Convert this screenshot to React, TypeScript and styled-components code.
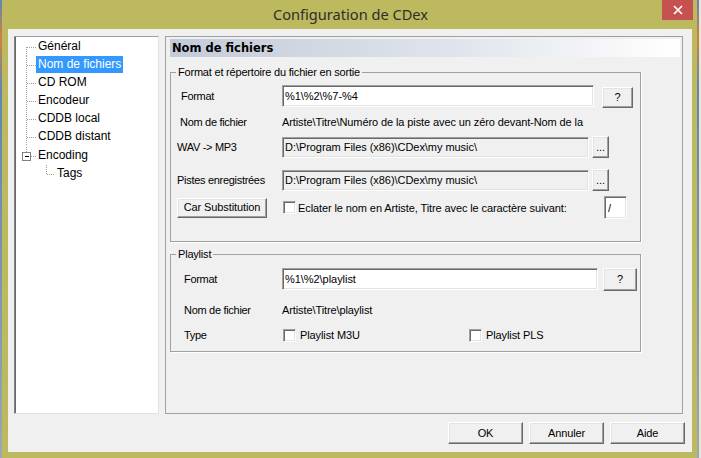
import React from "react";
import styled, { createGlobalStyle } from "styled-components";

const Global = createGlobalStyle`
  html, body { margin: 0; padding: 0; background: #e6e5dc; }
  body { width: 701px; height: 458px; overflow: hidden; font-family: "Liberation Sans", Arial, sans-serif; }
  * { box-sizing: border-box; }
`;

const Screen = styled.div`
  width: 701px;
  height: 458px;
  display: flex;
  background: #e6e5dc;
`;

const DesktopEdge = styled.div`
  width: 2px;
  height: 100%;
  background: linear-gradient(to bottom, #5f86b5 0%, #d08040 8%, #5f86b5 20%, #7b95b2 60%, #9aa7b5 100%);
`;

const Frame = styled.div`
  width: 695px;
  height: 458px;
  background: #bdb95e;
  display: flex;
  flex-direction: column;
  padding-left: 6px;
`;

const TitleBar = styled.div`
  height: 29px;
  display: grid;
  grid-template-columns: 1fr auto 1fr;
  align-items: start;
  padding-right: 4px;
`;

const Title = styled.div`
  grid-column: 2;
  padding-top: 4px;
  font-family: "Noto Sans", "Open Sans", sans-serif;
  font-size: 14.6px;
  line-height: 20px;
  color: #2e2e2a;
`;

const CloseButton = styled.div`
  grid-column: 3;
  justify-self: end;
  width: 31px;
  height: 20px;
  background: #c75050;
  display: flex;
  align-items: center;
  justify-content: center;
`;

const Client = styled.div`
  width: 684px;
  height: 423px;
  background: #f0f0f0;
  display: flex;
  flex-direction: column;
  padding: 7px 7px 0 6px;
`;

const MainRow = styled.div`
  display: flex;
  gap: 6px;
  height: 378px;
  margin-right: 2px;
`;

const TreeBox = styled.div`
  width: 145px;
  height: 100%;
  background: #fff;
  border: 1px solid;
  border-color: #a0a0a0 #e3e3e3 #e3e3e3 #828282;
  box-shadow: inset 1px 0 0 #696969;
  padding: 1px 0 0 1px;
  display: flex;
  flex-direction: column;
`;

const TreeRow = styled.div<{ $h?: number }>`
  height: ${(p) => p.$h ?? 18}px;
  display: flex;
  align-items: flex-start;
`;

const TreeLabel = styled.span<{ $selected?: boolean }>`
  margin-top: 0;
  height: 17px;
  line-height: 17px;
  padding: 0 2px;
  font-size: 12px;
  white-space: nowrap;
  color: ${(p) => (p.$selected ? "#fff" : "#000")};
  background: ${(p) => (p.$selected ? "#3399ff" : "transparent")};
`;

const Connector = styled.svg`
  flex: none;
  display: block;
`;

const Page = styled.div`
  width: 518px;
  height: 100%;
  border: 1px solid #a0a0a0;
  padding: 2px 3px 0 4px;
  display: flex;
  flex-direction: column;
`;

const PageHeader = styled.div`
  width: 510px;
  height: 18px;
  padding-left: 2px;
  background: linear-gradient(to right, #c3cbd8 0%, #dfe4ec 55%, #ffffff 100%);
  font-family: "DejaVu Sans", Verdana, sans-serif;
  font-weight: bold;
  font-size: 11.5px;
  line-height: 18px;
  color: #000;
`;

const Group = styled.fieldset<{ $mt: number; $pt: number; $pb: number }>`
  margin: ${(p) => p.$mt}px 0 0 0;
  padding: ${(p) => p.$pt}px 0 ${(p) => p.$pb}px 6px;
  width: 471px;
  min-width: 0;
  border: 1px solid #a0a0a0;
  box-shadow: 1px 1px 0 #fff;
  display: flex;
  flex-direction: column;
`;

const Legend = styled.legend`
  margin-left: -1px;
  padding: 0 2px;
  font-size: 11px;
  letter-spacing: -0.2px;
  line-height: 13px;
  color: #000;
`;

const Row = styled.div<{ $h: number; $mt?: number; $pr?: number }>`
  display: flex;
  align-items: center;
  height: ${(p) => p.$h}px;
  margin-top: ${(p) => p.$mt ?? 0}px;
  padding-right: ${(p) => p.$pr ?? 0}px;
`;

const Label = styled.span<{ $indent?: number }>`
  flex: none;
  width: 105px;
  padding-left: ${(p) => p.$indent ?? 0}px;
  font-size: 11px;
  letter-spacing: -0.3px;
  color: #000;
  white-space: nowrap;
`;

const Value = styled.span`
  font-size: 11px;
  letter-spacing: -0.1px;
  color: #000;
  white-space: nowrap;
`;

const TextBox = styled.input<{ $w: number; $h: number }>`
  flex: none;
  width: ${(p) => p.$w}px;
  height: ${(p) => p.$h}px;
  margin: 0;
  padding: 0 2px;
  background: ${(p) => (p.disabled ? "#f0f0f0" : "#fff")};
  border: 1px solid;
  border-color: #a0a0a0 #fff #fff #a0a0a0;
  box-shadow: inset 1px 1px 0 #696969, inset -1px -1px 0 #e3e3e3;
  font-family: "Liberation Sans", Arial, sans-serif;
  font-size: 11px;
  letter-spacing: -0.05px;
  color: #000;
  outline: none;
  &:disabled { color: #000; -webkit-text-fill-color: #000; opacity: 1; }
`;

const Button = styled.button<{ $w: number; $h: number; $ml?: number; $mt?: number }>`
  flex: none;
  width: ${(p) => p.$w}px;
  height: ${(p) => p.$h}px;
  margin: ${(p) => p.$mt ?? 0}px 0 0 ${(p) => p.$ml ?? 0}px;
  padding: 0;
  align-self: ${(p) => (p.$mt ? "flex-start" : "center")};
  background: #f0f0f0;
  border: 1px solid;
  border-color: #ffffff #696969 #696969 #ffffff;
  box-shadow: inset -1px -1px 0 #a0a0a0, inset 1px 1px 0 #e3e3e3;
  font-family: "Liberation Sans", Arial, sans-serif;
  font-size: 11px;
  letter-spacing: -0.1px;
  color: #000;
  line-height: 1;
`;

const CheckItem = styled.label<{ $ml?: number; $gap?: number }>`
  display: flex;
  align-items: center;
  gap: ${(p) => p.$gap ?? 4}px;
  margin-left: ${(p) => p.$ml ?? 0}px;
  font-size: 11px;
  letter-spacing: -0.1px;
  color: #000;
  white-space: nowrap;
`;

const CheckBox = styled.span`
  flex: none;
  width: 13px;
  height: 13px;
  background: #fff;
  border: 1px solid;
  border-color: #a0a0a0 #fff #fff #a0a0a0;
  box-shadow: inset 1px 1px 0 #696969, inset -1px -1px 0 #e3e3e3;
`;

const TypeChoices = styled.div`
  display: grid;
  grid-template-columns: 186px auto;
  margin-left: 1px;
`;

const SeparatorBox = styled(TextBox)`
  margin-left: auto;
  padding: 0 3px;
  align-self: flex-start;
`;

const ButtonRow = styled.div`
  display: flex;
  justify-content: flex-end;
  gap: 6px;
  margin-top: 8px;
`;

type TreeKind = "first" | "mid" | "expander" | "child";

const TreeConnector = ({ kind }: { kind: TreeKind }) => {
  const dot = { stroke: "#a0a0a0", strokeWidth: 1, strokeDasharray: "1 1", shapeRendering: "crispEdges" as const };
  if (kind === "child") {
    return (
      <Connector width={39} height={18}>
        <line x1={30.5} y1={0} x2={30.5} y2={10} {...dot} />
        <line x1={31} y1={9.5} x2={39} y2={9.5} {...dot} />
      </Connector>
    );
  }
  if (kind === "expander") {
    return (
      <Connector width={20} height={18}>
        <line x1={10.5} y1={0} x2={10.5} y2={6} {...dot} />
        <rect x={6.5} y={5.5} width={8} height={8} fill="#fff" stroke="#808080" shapeRendering="crispEdges" />
        <line x1={8.5} y1={9.5} x2={12.5} y2={9.5} stroke="#000" shapeRendering="crispEdges" />
        <line x1={15} y1={9.5} x2={20} y2={9.5} {...dot} />
      </Connector>
    );
  }
  return (
    <Connector width={20} height={18}>
      <line x1={10.5} y1={kind === "first" ? 9 : 0} x2={10.5} y2={18} {...dot} />
      <line x1={11} y1={9.5} x2={20} y2={9.5} {...dot} />
    </Connector>
  );
};

const treeItems: { label: string; kind: TreeKind; selected?: boolean; h?: number }[] = [
  { label: "Général", kind: "first" },
  { label: "Nom de fichiers", kind: "mid", selected: true },
  { label: "CD ROM", kind: "mid" },
  { label: "Encodeur", kind: "mid" },
  { label: "CDDB local", kind: "mid" },
  { label: "CDDB distant", kind: "mid", h: 19 },
  { label: "Encoding", kind: "expander" },
  { label: "Tags", kind: "child" },
];

export default function App() {
  return (
    <>
      <Global />
      <Screen>
        <DesktopEdge />
        <Frame>
          <TitleBar>
            <Title>Configuration de CDex</Title>
            <CloseButton>
              <svg width="10" height="10" viewBox="0 0 10 10">
                <path d="M1 1 L9 9 M9 1 L1 9" stroke="#fff" strokeWidth="1.7" fill="none" />
              </svg>
            </CloseButton>
          </TitleBar>
          <Client>
            <MainRow>
              <TreeBox>
                {treeItems.map((it) => (
                  <TreeRow key={it.label} $h={it.h}>
                    <TreeConnector kind={it.kind} />
                    <TreeLabel $selected={it.selected}>{it.label}</TreeLabel>
                  </TreeRow>
                ))}
              </TreeBox>
              <Page>
                <PageHeader>Nom de fichiers</PageHeader>
                <Group $mt={9} $pt={6} $pb={22}>
                  <Legend>Format et répertoire du fichier en sortie</Legend>
                  <Row $h={22}>
                    <Label $indent={4}>Format</Label>
                    <TextBox $w={312} $h={22} readOnly value="%1\%2\%7-%4" />
                    <Button $w={31} $h={21} $ml={8} $mt={2}>?</Button>
                  </Row>
                  <Row $h={18} $mt={6}>
                    <Label $indent={3}>Nom de fichier</Label>
                    <Value>Artiste\Titre\Numéro de la piste avec un zéro devant-Nom de la</Value>
                  </Row>
                  <Row $h={22} $mt={5}>
                    <Label>WAV -&gt; MP3</Label>
                    <TextBox $w={307} $h={21} disabled value="D:\Program Files (x86)\CDex\my music\" />
                    <Button $w={17} $h={22} $ml={3}>...</Button>
                  </Row>
                  <Row $h={22} $mt={11}>
                    <Label>Pistes enregistrées</Label>
                    <TextBox $w={307} $h={21} disabled value="D:\Program Files (x86)\CDex\my music\" />
                    <Button $w={17} $h={22} $ml={3}>...</Button>
                  </Row>
                  <Row $h={23} $mt={5} $pr={13}>
                    <Button $w={90} $h={20}>Car Substitution</Button>
                    <CheckItem $ml={16} $gap={2}>
                      <CheckBox />
                      Eclater le nom en Artiste, Titre avec le caractère suivant:
                    </CheckItem>
                    <SeparatorBox $w={23} $h={23} readOnly value="/" />
                  </Row>
                </Group>
                <Group $mt={6} $pt={7} $pb={7}>
                  <Legend>Playlist</Legend>
                  <Row $h={22}>
                    <Label $indent={7}>Format</Label>
                    <TextBox $w={316} $h={22} readOnly value="%1\%2\playlist" />
                    <Button $w={34} $h={23} $ml={5}>?</Button>
                  </Row>
                  <Row $h={18} $mt={11}>
                    <Label $indent={7}>Nom de fichier</Label>
                    <Value>Artiste\Titre\playlist</Value>
                  </Row>
                  <Row $h={18} $mt={7}>
                    <Label $indent={7}>Type</Label>
                    <TypeChoices>
                      <CheckItem>
                        <CheckBox />
                        Playlist M3U
                      </CheckItem>
                      <CheckItem>
                        <CheckBox />
                        Playlist PLS
                      </CheckItem>
                    </TypeChoices>
                  </Row>
                </Group>
              </Page>
            </MainRow>
            <ButtonRow>
              <Button $w={75} $h={22}>OK</Button>
              <Button $w={75} $h={22}>Annuler</Button>
              <Button $w={75} $h={22}>Aide</Button>
            </ButtonRow>
          </Client>
        </Frame>
        <DesktopEdge />
      </Screen>
    </>
  );
}
